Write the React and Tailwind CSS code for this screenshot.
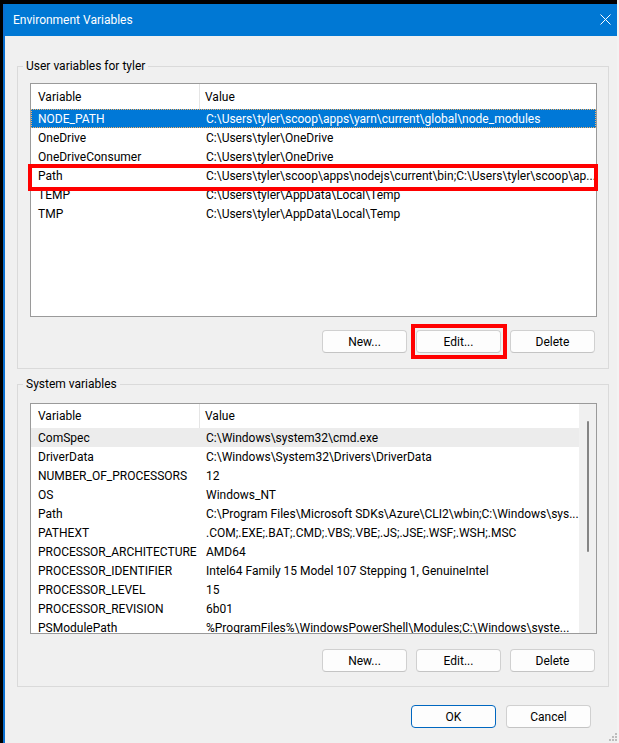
import React from "react";

const userVars = [
  ["NODE_PATH", "C:\\Users\\tyler\\scoop\\apps\\yarn\\current\\global\\node_modules"],
  ["OneDrive", "C:\\Users\\tyler\\OneDrive"],
  ["OneDriveConsumer", "C:\\Users\\tyler\\OneDrive"],
  ["Path", "C:\\Users\\tyler\\scoop\\apps\\nodejs\\current\\bin;C:\\Users\\tyler\\scoop\\ap..."],
  ["TEMP", "C:\\Users\\tyler\\AppData\\Local\\Temp"],
  ["TMP", "C:\\Users\\tyler\\AppData\\Local\\Temp"],
];

const sysVars = [
  ["ComSpec", "C:\\Windows\\system32\\cmd.exe"],
  ["DriverData", "C:\\Windows\\System32\\Drivers\\DriverData"],
  ["NUMBER_OF_PROCESSORS", "12"],
  ["OS", "Windows_NT"],
  ["Path", "C:\\Program Files\\Microsoft SDKs\\Azure\\CLI2\\wbin;C:\\Windows\\sys..."],
  ["PATHEXT", ".COM;.EXE;.BAT;.CMD;.VBS;.VBE;.JS;.JSE;.WSF;.WSH;.MSC"],
  ["PROCESSOR_ARCHITECTURE", "AMD64"],
  ["PROCESSOR_IDENTIFIER", "Intel64 Family 15 Model 107 Stepping 1, GenuineIntel"],
  ["PROCESSOR_LEVEL", "15"],
  ["PROCESSOR_REVISION", "6b01"],
  ["PSModulePath", "%ProgramFiles%\\WindowsPowerShell\\Modules;C:\\Windows\\syste..."],
];

function Header({ tall }) {
  return (
    <div className={"flex items-center shrink-0 " + (tall ? "h-[25px]" : "h-[24px]")}>
      <div className="w-[169px] h-full flex items-center pl-[7px] border-r border-[#e5e5e5]">Variable</div>
      <div className="pl-[5px]">Value</div>
    </div>
  );
}

function Row({ name, value, selected, hover }) {
  return (
    <div
      className={
        "flex h-[19px] items-center shrink-0 " +
        (selected
          ? "bg-[#0078d7] text-white outline outline-1 outline-dotted outline-offset-[-1px] outline-[#f7b267]"
          : hover
          ? "bg-[#ececec]"
          : "")
      }
    >
      <div className="w-[169px] pl-[7px] whitespace-nowrap overflow-hidden">{name}</div>
      <div className="flex-1 pl-[6px] whitespace-nowrap overflow-hidden">{value}</div>
    </div>
  );
}

function Button({ children, primary }) {
  return (
    <div
      className={
        "w-[85px] h-[23px] flex items-center justify-center rounded-[4px] bg-[#fdfdfd] border " +
        (primary ? "border-[#0067c0]" : "border-[#d0d0d0] border-b-[#c4c4c4]")
      }
    >
      {children}
    </div>
  );
}

function GroupBox({ label, children, className }) {
  return (
    <div className={"relative border border-[#dadada] w-[592px] " + className}>
      <span className="absolute left-[5px] -top-[9px] px-[3px] leading-[16px] bg-[#f0f0f0]">{label}</span>
      {children}
    </div>
  );
}

export default function App() {
  return (
    <div
      className="w-[619px] h-[743px] bg-black pt-[4px] pl-[3px] border-r-2 border-[#f3f3f3] overflow-hidden text-[12px] text-black"
      style={{ fontFamily: "Roboto, 'Noto Sans', sans-serif" }}
    >
      <div className="relative h-full border-l-2 border-[#0a6fd0] bg-[#f0f0f0] flex flex-col">
        {/* Title bar */}
        <div className="h-[32px] bg-[#0078d4] flex items-center justify-between pl-[8px] pr-[6px] shrink-0">
          <span className="text-white">Environment Variables</span>
          <svg width="11" height="11" viewBox="0 0 11 11" className="mb-[1px]">
            <path d="M0.5 0.5 L10.5 10.5 M10.5 0.5 L0.5 10.5" stroke="white" strokeWidth="1" />
          </svg>
        </div>

        {/* User variables */}
        <GroupBox label="User variables for tyler" className="ml-[12px] mt-[30px] h-[303px] pt-[16px] pl-[12px]">
          <div className="relative w-[567px] h-[234px] border border-[#9a9a9a] bg-white">
            <div className="h-full overflow-hidden flex flex-col">
              <Header tall />
              {userVars.map(([n, v], i) => (
                <Row key={n} name={n} value={v} selected={i === 0} />
              ))}
            </div>
            <div className="absolute left-[-3px] top-[80px] w-[570px] h-[27px] border-4 border-[#ff0000]" />
          </div>
          <div className="flex gap-[9px] mt-[13px] ml-[292px]">
            <Button>New...</Button>
            <div className="relative">
              <Button>Edit...</Button>
              <div className="absolute left-[-5px] top-[-6px] w-[96px] h-[35px] border-4 border-[#ff0000]" />
            </div>
            <Button>Delete</Button>
          </div>
        </GroupBox>

        {/* System variables */}
        <GroupBox label="System variables" className="ml-[12px] mt-[15px] h-[303px] pt-[18px] pl-[12px]">
          <div className="w-[567px] h-[231px] border border-[#9a9a9a] bg-white flex overflow-hidden">
            <div className="flex-1 flex flex-col overflow-hidden">
              <Header />
              {sysVars.map(([n, v], i) => (
                <Row key={n} name={n} value={v} hover={i === 0} />
              ))}
            </div>
            <div className="w-[17px] h-full bg-[#f0f0f0] pt-[17px] pl-[8px] shrink-0">
              <div className="w-[2px] h-[131px] bg-[#858585] rounded-full" />
            </div>
          </div>
          <div className="flex gap-[9px] mt-[15px] ml-[292px]">
            <Button>New...</Button>
            <Button>Edit...</Button>
            <Button>Delete</Button>
          </div>
        </GroupBox>

        {/* OK / Cancel */}
        <div className="flex justify-end gap-[10px] mt-[18px] pr-[26px]">
          <Button primary>OK</Button>
          <Button>Cancel</Button>
        </div>

        {/* resize grip */}
        <div className="absolute right-[0px] bottom-[2px] grid grid-cols-3 gap-[1px]">
          <span className="w-[2px] h-[2px]" />
          <span className="w-[2px] h-[2px]" />
          <span className="w-[2px] h-[2px] bg-[#bcbcbc]" />
          <span className="w-[2px] h-[2px]" />
          <span className="w-[2px] h-[2px] bg-[#bcbcbc]" />
          <span className="w-[2px] h-[2px] bg-[#bcbcbc]" />
          <span className="w-[2px] h-[2px] bg-[#bcbcbc]" />
          <span className="w-[2px] h-[2px] bg-[#bcbcbc]" />
          <span className="w-[2px] h-[2px] bg-[#bcbcbc]" />
        </div>
      </div>
    </div>
  );
}
